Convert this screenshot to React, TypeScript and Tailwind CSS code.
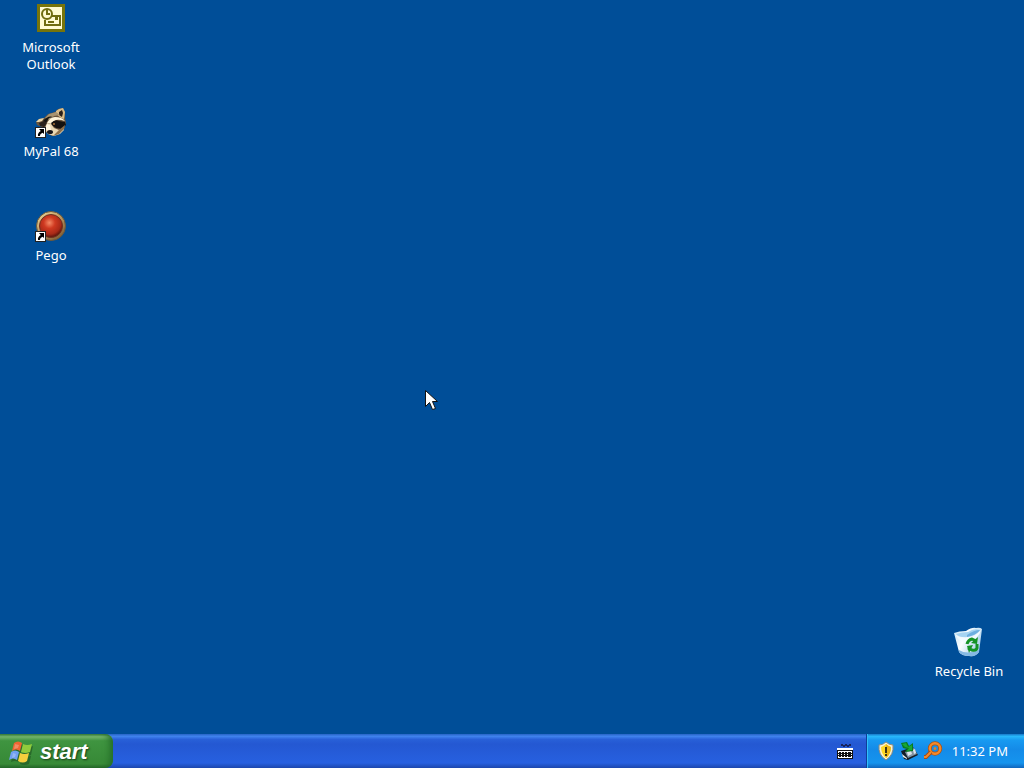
import type { ReactNode } from "react";

function ShortcutArrow() {
  return (
    <g>
      <rect x="0.5" y="21.5" width="10" height="10" fill="#fff" stroke="#222" strokeWidth="1" />
      <path d="M4 23h5v5L7.6 26.8Q5 27.6 4.8 30H3Q2.400 27 5.800 25z" fill="#000" />
    </g>
  );
}

function OutlookIcon() {
  return (
    <svg width="32" height="32" viewBox="0 0 32 32" aria-hidden="true">
      <rect x="2" y="2" width="28" height="28" fill="#77740b" />
      <rect x="5" y="5" width="22" height="22" fill="#fffbd2" />
      <path d="M17 14h8v9H10v-5" fill="none" stroke="#706d10" strokeWidth="2" />
      <circle cx="12" cy="12" r="5" fill="#fffbd2" stroke="#706d10" strokeWidth="2" />
      <path d="M12 8v4h3" fill="none" stroke="#706d10" strokeWidth="2" />
      <path d="M20 15h3v3h-3zM13 19h6v2h-6z" fill="#706d10" />
    </svg>
  );
}

function RaccoonIcon() {
  return (
    <svg width="32" height="32" viewBox="0 0 32 32" aria-hidden="true">
      <path d="M1 16 4 13l5-1 4-4 7-2 3-3 5-1 2 4v6l1 5-2 6-5 5-7 2-5-3-5-6-5-2z" fill="#6b553c" />
      <path d="m21 5 3-2 4-1 2 4-1 7-3-1-5-4z" fill="#d9bd8a" />
      <path d="m24 6 3-2 1 3-1 4-3-2z" fill="#2c2019" />
      <path d="m1 16 3-3 5-1-2 3-3 1z" fill="#e8d5a9" />
      <path d="m10 12 4-4 7-2 4 3-6 1-5 4z" fill="#a89470" />
      <path d="M8 15q5-6 10-4l-4 1-3 5z" fill="#171410" />
      <path d="m4 17 5-2 3 2-3 4-4-1z" fill="#2a211a" />
      <path d="M12 17q3-6 8-6 7 0 10 4-6-2-9-1-3 1-4 4z" fill="#fff5d9" />
      <path d="M16 17q4-4 8-2l6 1 1 3-4 4-6-1-4-3z" fill="#15120f" />
      <path d="m12 17 4 1 3 4 5 2 4-2 1 2-4 4-6 2-6-2-3-4z" fill="#ead8b3" />
      <path d="m12 18 3 1 1 5-3 2-3-4z" fill="#fff4dd" />
      <path d="m24 24 6-5-1 4-5 5-6 2z" fill="#8e704b" />
      <ellipse cx="15" cy="26" rx="3" ry="2" fill="#17151a" />
      <circle cx="19" cy="18" r="1" fill="#ad7537" />
      <ShortcutArrow />
    </svg>
  );
}

function PegoIcon() {
  return (
    <svg width="32" height="32" viewBox="0 0 32 32" aria-hidden="true">
      <defs>
        <radialGradient id="pego-red" cx="43%" cy="36%" r="62%">
          <stop stopColor="#f48b66" />
          <stop offset=".4" stopColor="#cf3920" />
          <stop offset=".8" stopColor="#a92a18" />
          <stop offset="1" stopColor="#62160d" />
        </radialGradient>
        <linearGradient id="pego-rim" x2=".8" y2="1">
          <stop stopColor="#f0dda0" />
          <stop offset=".5" stopColor="#c19c62" />
          <stop offset="1" stopColor="#795731" />
        </linearGradient>
      </defs>
      <circle cx="16" cy="16" r="14.5" fill="url(#pego-rim)" stroke="#6b583b" />
      <circle cx="16" cy="16" r="11.5" fill="url(#pego-red)" stroke="#70311f" />
      <ShortcutArrow />
    </svg>
  );
}

function RecycleIcon() {
  return (
    <svg width="32" height="32" viewBox="0 0 32 32" aria-hidden="true">
      <defs>
        <linearGradient id="bin-body" x2="1" y2=".5">
          <stop stopColor="#c3e3f6" />
          <stop offset=".45" stopColor="#fafdff" />
          <stop offset="1" stopColor="#a8cfeb" />
        </linearGradient>
      </defs>
      <path d="M1 7q5-2 12-2 6-4 10-3 4-1 6 1l-3 23q-3 5-10 4-7 0-10-4z" fill="url(#bin-body)" />
      <path d="M3 8q6-2 12-2 6-4 12-2-5 6-13 7-7 1-11-3z" fill="#a6d4f2" />
      <path d="M14 9q7-5 13-5-3 5-13 7z" fill="#6dafe0" />
      <path d="M2 8q4 4 11 4 9-1 15-8-2 9-14 12-8 0-12-8z" fill="#f3fbff" />
      <path d="M6 24q8 5 20 0v2q-3 5-10 4-7 0-10-4z" fill="#86b9e3" />
      <g fill="none" stroke="#159326" strokeWidth="3">
        <path d="M14 18q1-4 5-5l4 2" />
        <path d="M24 18v4q-1 3-5 2l-4-2" />
      </g>
      <path d="m25 11-1 7-6-1zM14 20l6-1-4 8z" fill="#159326" />
    </svg>
  );
}

function WindowsFlag() {
  return (
    <svg width="26" height="26" viewBox="0 0 26 26" aria-hidden="true">
      <g fill="#225b25" opacity=".7" transform="translate(1 2)">
        <path d="M6 4q4-3 8 0l-2 8q-4-3-8 0z" />
        <path d="M15 5q4 2 9 0l-2 9q-5 2-9 0z" />
        <path d="M4 13q4-2 8 0l-2 8q-4-2-8 0z" />
        <path d="M13 14q5 2 9 1l-2 8q-5 2-9 0z" />
      </g>
      <path d="M6 4q4-3 8 0l-2 8q-4-3-8 0z" fill="#ef6532" />
      <path d="M15 5q4 2 9 0l-2 8q-5 2-9 0z" fill="#91cb3c" />
      <path d="M3 13q4-3 8 0l-2 8q-4-3-8 0z" fill="#719ff2" />
      <path d="M12 14q4 2 9 0l-2 8q-4 3-9 0z" fill="#f6cf3d" />
      <path d="m7 5 4 1-1 3-4 1zM5 14l3 1-1 3-3 1z" fill="#fff" opacity=".25" />
    </svg>
  );
}

function KeyboardIcon() {
  return (
    <svg width="18" height="18" viewBox="0 0 18 18" aria-hidden="true">
      <path d="M5 2h2v1h2V2h2v1h2V2h2v2h-2v1h-2V4H9v1H7V4H5z" fill="#17245d" />
      <path d="M1 6h16v11H1z" fill="#fff" />
      <path d="M1 8h16v9H1z" fill="#111" />
      <path d="M2 9h14v2H2zm0 5h14v2H2z" fill="#fff" />
      <path d="M3 10h2v2H3zm3 0h2v2H6zm3 0h2v2H9zm3 0h3v2h-3zM3 13h2v2H3zm3 0h2v2H6zm3 0h2v2H9zm3 0h3v2h-3z" fill="#111" />
      <path d="M5 12h1v1H5zm3 0h1v1H8zm3 0h1v1h-1zm4 0h1v1h-1zM2 12h1v1H2z" fill="#fff" />
    </svg>
  );
}

function ShieldIcon() {
  return (
    <svg width="18" height="20" viewBox="0 0 18 20" aria-hidden="true">
      <path d="M9 1q3 3 7 3 1 10-7 15Q1 14 2 4q4 0 7-3z" fill="#f7f1d5" stroke="#8d8c80" />
      <path d="M9 3q2 2 5 3 0 7-5 11-5-4-5-11 3-1 5-3z" fill="#ffd825" />
      <path d="M9 3q2 2 5 3 0 7-5 11z" fill="#ecb716" />
      <path d="M8 6h2v6H8zm0 7h2v2H8z" fill="#3d3515" />
    </svg>
  );
}

function HardwareIcon() {
  return (
    <svg width="20" height="20" viewBox="0 0 20 20" aria-hidden="true">
      <path d="m2 10 12-4 5 8-10 5-4-1z" fill="#141d28" />
      <path d="m6 11 9-4 3 6-9 4z" fill="#8093a3" />
      <path d="m8 11 4-1 1 3-4 2zm6-2 2-1 1 4-2 1z" fill="#dce5ec" />
      <path d="m3 13 5 4v1l-4-2z" fill="#e9eee9" />
      <path d="m2 2 6-1 2 4 4-3v8l-8 1 2-3-4-1z" fill="#087b21" />
      <path d="m3 3 4-1 2 4 4-2v5l-5 1 2-3-4-1z" fill="#18a736" />
    </svg>
  );
}

function SearchIcon() {
  return (
    <svg width="20" height="20" viewBox="0 0 20 20" aria-hidden="true">
      <circle cx="12" cy="7.500" r="5.200" fill="none" stroke="#aa5218" strokeWidth="4" />
      <circle cx="12" cy="7.500" r="5.200" fill="none" stroke="#f48928" strokeWidth="2.400" />
      <circle cx="12" cy="7.500" r="1.500" fill="#df812e" />
      <path d="m8 11-5 5H1" fill="none" stroke="#a84b16" strokeWidth="4" />
      <path d="m8 11-5 5H1" fill="none" stroke="#f48928" strokeWidth="2" />
    </svg>
  );
}

function DesktopItem({ label, children }: { label: string; children: ReactNode }) {
  return (
    <button className="flex h-[104px] w-[74px] flex-col items-center gap-[5px] text-center text-[13px] leading-[17px] text-white">
      {children}
      <span>{label}</span>
    </button>
  );
}

export default function App() {
  return (
    <div className="relative flex min-h-screen flex-col overflow-hidden bg-[#004e98] font-['Noto_Sans','Liberation_Sans',sans-serif]">
      <main className="flex flex-1 justify-between px-[14px] pt-[2px] pb-1">
        <section className="flex flex-col" aria-label="Shortcuts">
          <DesktopItem label="Microsoft Outlook"><OutlookIcon /></DesktopItem>
          <DesktopItem label="MyPal 68"><RaccoonIcon /></DesktopItem>
          <DesktopItem label="Pego"><PegoIcon /></DesktopItem>
        </section>
        <section className="flex flex-col justify-end pr-1" aria-label="System">
          <DesktopItem label="Recycle Bin"><RecycleIcon /></DesktopItem>
        </section>
      </main>

      <footer className="flex h-[34px] shrink-0 items-stretch bg-[linear-gradient(to_bottom,#2664c5_0%,#3f83ed_7%,#2860d8_16%,#2458d2_30%,#2760e0_85%,#1c46ad_100%)]">
        <button className="flex w-[113px] items-center gap-[6px] rounded-r-lg bg-[linear-gradient(to_bottom,#397b3c_0%,#75b66e_8%,#3f9440_20%,#388b38_75%,#398c38_88%,#246628_100%)] pt-[2px] pl-2 font-['Liberation_Sans',sans-serif] text-[22px] leading-6 font-bold text-white italic shadow-[inset_-6px_0_7px_-3px_#236c28] [text-shadow:1px_1px_2px_#173d17]">
          <WindowsFlag />
          <span>start</span>
        </button>
        <div className="flex-1" />
        <button className="flex w-[42px] items-center justify-center" aria-label="Keyboard"><KeyboardIcon /></button>
        <div className="flex w-[158px] items-center justify-between border-l border-[#103d99] bg-[linear-gradient(to_bottom,#1778c8_0%,#27b8fb_7%,#189af1_18%,#148be8_45%,#1594ee_85%,#1065bc_100%)] pr-4 pl-[10px] text-white shadow-[inset_1px_0_0_#31c0fa]">
          <div className="flex items-center gap-1">
            <button aria-label="Security alerts"><ShieldIcon /></button>
            <button aria-label="Safely remove hardware"><HardwareIcon /></button>
            <button aria-label="Search"><SearchIcon /></button>
          </div>
          <time className="text-[13px] leading-[17px]">11:32 PM</time>
        </div>
      </footer>

      <svg className="absolute top-[390px] left-[425px]" width="14" height="22" viewBox="0 0 14 22" aria-hidden="true">
        <path d="M.5.5v16l4-4 3 7 3-1-3-7h5z" fill="#fff" stroke="#111" />
      </svg>
    </div>
  );
}
